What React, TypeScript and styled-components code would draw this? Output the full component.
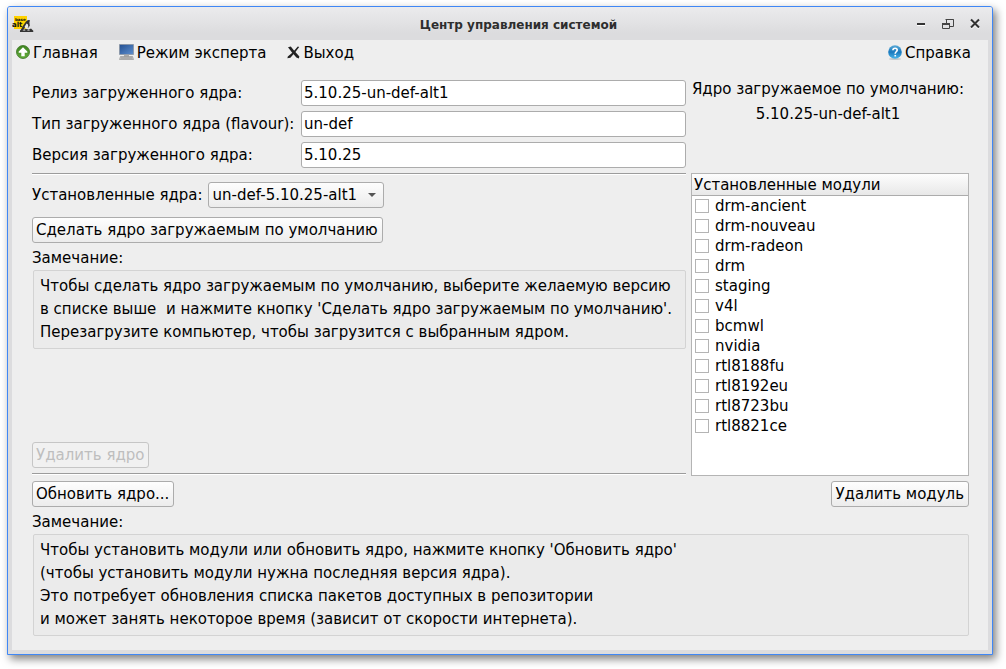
import React from "react";
import styled, { createGlobalStyle } from "styled-components";

const GlobalStyle = createGlobalStyle`
  *, *::before, *::after { box-sizing: border-box; }
  html, body { margin: 0; background: #fff; }
  body, button, input, select {
    font-family: "DejaVu Sans", sans-serif;
    font-size: 15px;
    line-height: 18px;
    color: #000;
  }
`;

const Desktop = styled.div`
  display: flex;
  min-height: 100vh;
  padding: 6px 13px 14px 7px;
`;

const Window = styled.div`
  flex: 1;
  display: flex;
  flex-direction: column;
  min-width: 0;
  border: 1px solid #3f87f5;
  border-radius: 3px 3px 0 0;
  background: #dcdcde;
  box-shadow: 3px 4px 8px rgba(0, 0, 0, 0.5);
`;

const TitleBar = styled.header`
  display: flex;
  align-items: center;
  height: 33px;
  padding: 0 8px 0 4px;
  border-radius: 2px 2px 0 0;
  background: linear-gradient(#ebebed, #dcdcde 80%);
`;

const Title = styled.h1`
  flex: 1;
  margin: 0;
  padding: 2px 0 0 92px;
  text-align: center;
  font-size: 12px;
  line-height: 18px;
  font-weight: bold;
  color: #2e2e2e;
`;

const WindowControls = styled.div`
  display: flex;
  gap: 8px;
`;

const WindowButton = styled.button`
  display: flex;
  width: 19px;
  height: 19px;
  align-items: center;
  justify-content: center;
  padding: 0;
  border: 0;
  background: none;
`;

const Content = styled.div`
  flex: 1;
  display: flex;
  flex-direction: column;
  margin: 0 4px 4px;
  background: #eee;
`;

const Toolbar = styled.nav`
  display: flex;
  gap: 21px;
  height: 26px;
  align-items: center;
  padding: 0 17px 0 4px;
`;

const ToolItem = styled.button<{ $end?: boolean }>`
  display: flex;
  align-items: center;
  gap: 3px;
  padding: 0;
  border: 0;
  background: none;
  margin-left: ${(p) => (p.$end ? "auto" : "0")};

  svg { margin-bottom: 2px; }
`;

const Main = styled.main`
  flex: 1;
  display: flex;
  flex-direction: column;
  padding: 14px 19px 14px 20px;
`;

const Columns = styled.div<{ $grow?: boolean }>`
  display: grid;
  grid-template-columns: minmax(0, 1fr) 278px;
  column-gap: 5px;
  flex: ${(p) => (p.$grow ? "1" : "none")};
`;

const KernelInfo = styled.div`
  display: grid;
  grid-template-columns: 264px minmax(0, 1fr);
  gap: 5px;
  align-items: center;
  padding-bottom: 5px;
`;

const Label = styled.label`
  white-space: nowrap;
`;

const TextField = styled.input`
  width: 100%;
  height: 26px;
  padding: 0 2px;
  border: 1px solid #acacac;
  border-radius: 3px;
  background: #fff;
  outline: none;
`;

const DefaultKernel = styled.div`
  text-align: center;
  line-height: 25px;
  white-space: nowrap;
  padding-right: 4px;
  margin-top: -3px;
`;

const KernelPanel = styled.section`
  display: flex;
  flex-direction: column;
  align-items: flex-start;
`;

const Separator = styled.hr`
  width: 100%;
  height: 2px;
  margin: 0 0 1px;
  border: 0;
  border-top: 1px solid #9c9c9c;
  border-bottom: 1px solid #fff;
`;

const PickerRow = styled.div`
  display: flex;
  align-items: center;
  gap: 5px;
  margin: 6px 0 9px;
`;

const Picker = styled.div`
  position: relative;
  display: flex;
`;

const Select = styled.select`
  appearance: none;
  height: 26px;
  padding: 0 25px 0 4px;
  border: 1px solid #acacac;
  border-radius: 3px;
  background: linear-gradient(#fdfdfd, #ececec);
`;

const PickerArrow = styled.svg`
  position: absolute;
  right: 8px;
  top: 11px;
  pointer-events: none;
`;

const Button = styled.button`
  height: 26px;
  padding: 0 4px 0 3px;
  border: 1px solid #acacac;
  border-radius: 3px;
  background: linear-gradient(#fefefe, #ececec);
  white-space: nowrap;
  &:disabled {
    color: #bebebe;
    border-color: #c6c6c6;
    background: #f1f1f1;
  }
`;

const NoteLabel = styled.div`
  padding: 6px 0 3px;
`;

const Note = styled.p`
  margin: 0 0 0 1px;
  padding: 4px 6px;
  border: 1px solid #d3d3d3;
  border-radius: 2px;
  background: #ebebeb;
  line-height: 23px;
  white-space: pre-wrap;
  align-self: stretch;
`;

const Spacer = styled.div`
  flex: 1;
`;

const BottomAction = styled.div`
  padding: 10px 0 5px;
`;

const ModuleTable = styled.table`
  display: flex;
  flex-direction: column;
  border: 1px solid #b4b4b4;
  background: #fff;
  tr { display: flex; }
`;

const ModuleHead = styled.th`
  flex: 1;
  height: 22px;
  padding: 2px;
  text-align: left;
  font-weight: normal;
  background: linear-gradient(#fdfdfd, #e8e8e8);
  border-bottom: 1px solid #acacac;
`;

const ModuleCell = styled.td`
  padding: 0;
  label {
    display: flex;
    align-items: center;
    gap: 6px;
    height: 20px;
    padding: 0 3px;
  }
`;

const CheckBox = styled.input`
  appearance: none;
  width: 14px;
  height: 14px;
  margin: 0;
  border: 1px solid #b4b4b4;
  background: #fff;
`;

const Actions = styled.div`
  display: flex;
  justify-content: space-between;
  padding-top: 5px;
`;

const modules = [
  "drm-ancient", "drm-nouveau", "drm-radeon", "drm", "staging", "v4l",
  "bcmwl", "nvidia", "rtl8188fu", "rtl8192eu", "rtl8723bu", "rtl8821ce",
];

const kernelFields = [
  { id: "release", label: "Релиз загруженного ядра:", value: "5.10.25-un-def-alt1" },
  { id: "flavour", label: "Тип загруженного ядра (flavour):", value: "un-def" },
  { id: "version", label: "Версия загруженного ядра:", value: "5.10.25" },
];

const LogoIcon = () => (
  <svg width="22" height="18" viewBox="0 0 22 18" aria-hidden="true">
    <path d="M2 1H15V14H2Z" fill="#ffd200" />
    <g fontFamily="DejaVu Sans" fontWeight="bold" fill="#111">
      <text x="3" y="6" fontSize="4">base</text>
      <text x="0" y="12" fontSize="7">alt</text>
    </g>
    <path d="M11.500 10l2.500-3.500 2-1.500 2 .300-.600 2 .400 3.500-1.500 2-3-.500-2.500 3-1 1-2 .300z" fill="#333" />
    <path d="M12.500 12l2-3.500 1.500 1 .300 2.500-2 2z" fill="#e9e9e9" />
    <path d="M8 15.500l3-1 3-.500 3 .500 2-1 2.500 2.500-.500 1H8z" fill="#333" />
    <path d="M10.500 15.600l2-1 1 1zM15 15.500l1.500-1 1.500 1z" fill="#f3f3f3" />
  </svg>
);

const HomeIcon = () => (
  <svg width="14" height="14" viewBox="0 0 14 14" aria-hidden="true">
    <defs>
      <linearGradient id="homeGreen" x1="0" y1="0" x2="0" y2="1">
        <stop offset="0" stopColor="#3f8520" />
        <stop offset="1" stopColor="#63ac3c" />
      </linearGradient>
    </defs>
    <circle cx="7" cy="7" r="6.500" fill="url(#homeGreen)" stroke="#3a741f" strokeWidth=".8" />
    <path d="M7 2.200L11.300 6.500V7.800H8.700V11.300H5.300V7.800H2.700V6.500Z" fill="#fff" />
  </svg>
);

const ComputerIcon = () => (
  <svg width="15" height="16" viewBox="0 0 15 16" aria-hidden="true">
    <defs>
      <linearGradient id="screenBlue" x1="0" y1="0" x2="1" y2="1">
        <stop offset="0" stopColor="#234f91" />
        <stop offset="1" stopColor="#5e8fce" />
      </linearGradient>
    </defs>
    <path d="M0.500 0.500H14.500V10.500H0.500Z" fill="url(#screenBlue)" stroke="#88919c" strokeWidth=".7" />
    <path d="M5 10.800h5v2H5z" fill="#aaa" />
    <path d="M1.500 12.500h12l1 3H.500z" fill="#c4c4c4" stroke="#8b8b8b" strokeWidth=".6" />
    <path d="M2 14h11" stroke="#777" strokeWidth=".6" />
  </svg>
);

const ExitIcon = () => (
  <svg width="13" height="13" viewBox="0 0 13 13" aria-hidden="true">
    <path d="M1 1.200L3.800.600 7 4.600 12.400 10.400 11.800 12.400 9.400 11.600 5 6.400z" fill="#222" />
    <path d="M10.800.400L12.200 1 8 6.400 3.400 11.800 .400 12.200 .800 10.400 5.600 6.400z" fill="#222" />
  </svg>
);

const HelpIcon = () => (
  <svg width="14" height="15" viewBox="0 0 14 15" aria-hidden="true">
    <defs>
      <linearGradient id="helpBlue" x1="0" y1="0" x2="0" y2="1">
        <stop offset="0" stopColor="#5cabd8" />
        <stop offset=".5" stopColor="#1878bd" />
        <stop offset="1" stopColor="#49b6ea" />
      </linearGradient>
    </defs>
    <ellipse cx="7" cy="14" rx="6" ry="1" fill="#c4c8ca" />
    <circle cx="7" cy="7" r="6.800" fill="url(#helpBlue)" />
    <path d="M4.900 5.200C5 2.600 9.200 2.700 9.200 5.100 9.200 6.700 7.200 6.900 7.200 8.700" fill="none" stroke="#fff" strokeWidth="1.600" />
    <path d="M6.400 9.900h1.700v1.600H6.400z" fill="#fff" />
  </svg>
);

export default function App() {
  return (
    <>
      <GlobalStyle />
      <Desktop>
        <Window>
          <TitleBar>
            <LogoIcon />
            <Title>Центр управления системой</Title>
            <WindowControls>
              <WindowButton aria-label="Свернуть">
                <svg width="14" height="14" viewBox="0 0 14 14">
                  <path d="M3 8.500h8" stroke="#fff" />
                  <path d="M3 7h8" stroke="#333" strokeWidth="2" />
                </svg>
              </WindowButton>
              <WindowButton aria-label="Развернуть">
                <svg width="14" height="14" viewBox="0 0 14 14" fill="none" stroke="#444">
                  <path d="M5.500 6V2.500h7v7H9" />
                  <path d="M4.500 2.500h8" />
                  <path d="M1.500 7.500h7v4h-7z" />
                  <path d="M1 7h8" strokeWidth="2" />
                </svg>
              </WindowButton>
              <WindowButton aria-label="Закрыть">
                <svg width="14" height="14" viewBox="0 0 14 14">
                  <path d="M3 3.500l8 8M11 3.500l-8 8" stroke="#fff" strokeWidth="2" />
                  <path d="M3 2.500l8 8M11 2.500l-8 8" stroke="#333" strokeWidth="2" />
                </svg>
              </WindowButton>
            </WindowControls>
          </TitleBar>
          <Content>
            <Toolbar>
              <ToolItem><HomeIcon />Главная</ToolItem>
              <ToolItem><ComputerIcon />Режим эксперта</ToolItem>
              <ToolItem><ExitIcon />Выход</ToolItem>
              <ToolItem $end><HelpIcon />Справка</ToolItem>
            </Toolbar>
            <Main>
              <Columns>
                <KernelInfo>
                  {kernelFields.map((f) => (
                    <React.Fragment key={f.id}>
                      <Label htmlFor={f.id}>{f.label}</Label>
                      <TextField id={f.id} defaultValue={f.value} readOnly />
                    </React.Fragment>
                  ))}
                </KernelInfo>
                <DefaultKernel>
                  <div>Ядро загружаемое по умолчанию:</div>
                  <div>5.10.25-un-def-alt1</div>
                </DefaultKernel>
              </Columns>
              <Columns $grow>
                <KernelPanel>
                  <Separator />
                  <PickerRow>
                    <Label htmlFor="kernel">Установленные ядра:</Label>
                    <Picker>
                      <Select id="kernel">
                        <option>un-def-5.10.25-alt1</option>
                      </Select>
                      <PickerArrow width="8" height="4" viewBox="0 0 8 4">
                        <path d="M0 0h8L4 4z" fill="#555" />
                      </PickerArrow>
                    </Picker>
                  </PickerRow>
                  <Button>Сделать ядро загружаемым по умолчанию</Button>
                  <NoteLabel>Замечание:</NoteLabel>
                  <Note>
                    {"Чтобы сделать ядро загружаемым по умолчанию, выберите желаемую версию\nв списке выше  и нажмите кнопку 'Сделать ядро загружаемым по умолчанию'.\nПерезагрузите компьютер, чтобы загрузится с выбранным ядром."}
                  </Note>
                  <Spacer />
                  <BottomAction>
                    <Button disabled>Удалить ядро</Button>
                  </BottomAction>
                  <Separator />
                </KernelPanel>
                <ModuleTable>
                  <thead>
                    <tr><ModuleHead>Установленные модули</ModuleHead></tr>
                  </thead>
                  <tbody>
                    {modules.map((m) => (
                      <tr key={m}>
                        <ModuleCell>
                          <label><CheckBox type="checkbox" />{m}</label>
                        </ModuleCell>
                      </tr>
                    ))}
                  </tbody>
                </ModuleTable>
              </Columns>
              <Actions>
                <Button>Обновить ядро...</Button>
                <Button>Удалить модуль</Button>
              </Actions>
              <NoteLabel>Замечание:</NoteLabel>
              <Note>
                {"Чтобы установить модули или обновить ядро, нажмите кнопку 'Обновить ядро'\n(чтобы установить модули нужна последняя версия ядра).\nЭто потребует обновления списка пакетов доступных в репозитории\nи может занять некоторое время (зависит от скорости интернета)."}
              </Note>
            </Main>
          </Content>
        </Window>
      </Desktop>
    </>
  );
}
